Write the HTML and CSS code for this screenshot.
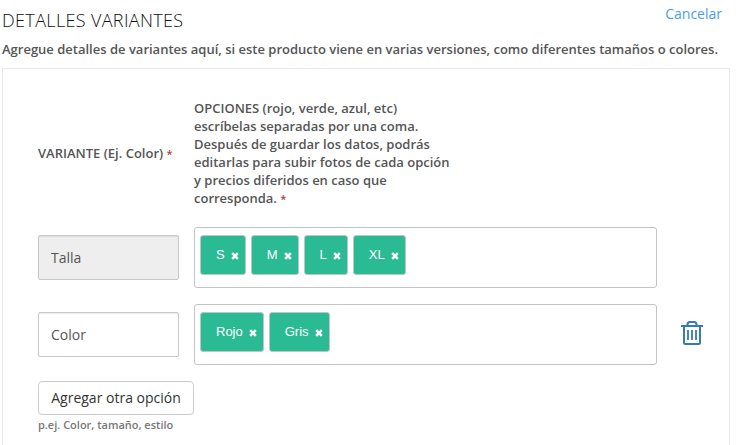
FILE: index.html
```html
<!DOCTYPE html>
<html lang="es">
<head>
<meta charset="utf-8">
<title>Detalles variantes</title>
<link rel="stylesheet" href="styles.css">
</head>
<body>
<svg class="defs" aria-hidden="true">
  <symbol id="times" viewBox="0 0 8 8"><path d="M1.200 1.200 6.800 6.800M6.800 1.200 1.200 6.800" stroke="#fff" stroke-width="2.500" fill="none"/></symbol>
</svg>
<header class="head">
  <h2 class="title">DETALLES VARIANTES</h2>
  <a class="cancel">Cancelar</a>
</header>
<p class="intro">Agregue detalles de variantes aquí, si este producto viene en varias versiones, como diferentes tamaños o colores.</p>
<section class="panel">
  <div class="row labels">
    <label class="label">VARIANTE (Ej. Color) <span class="req">*</span></label>
    <label class="label options">OPCIONES (rojo, verde, azul, etc)<br>escríbelas separadas por una coma.<br>Después de guardar los datos, podrás<br>editarlas para subir fotos de cada opción<br>y precios diferidos en caso que<br>corresponda. <span class="req">*</span></label>
  </div>
  <div class="row">
    <div class="field disabled">Talla</div>
    <div class="tags">
      <span class="tag">S<svg class="x"><use href="#times"/></svg></span>
      <span class="tag">M<svg class="x"><use href="#times"/></svg></span>
      <span class="tag">L<svg class="x"><use href="#times"/></svg></span>
      <span class="tag">XL<svg class="x"><use href="#times"/></svg></span>
    </div>
  </div>
  <div class="row">
    <div class="field">Color</div>
    <div class="tags">
      <span class="tag">Rojo<svg class="x"><use href="#times"/></svg></span>
      <span class="tag">Gris<svg class="x"><use href="#times"/></svg></span>
    </div>
    <svg class="trash" viewBox="0 0 22 24" fill="none" stroke="#337ab7" stroke-width="2">
      <path d="M0 5H22"/>
      <path d="M6.500 5V3.500Q6.500 1 9 1H13Q15.500 1 15.500 3.500V5" />
      <path d="M3 5V21.500Q3 23 4.500 23H17.500Q19 23 19 21.500V5"/>
      <path d="M7 9V19M11 9V19M15 9V19" stroke-width="1.800"/>
    </svg>
  </div>
  <button class="add">Agregar otra opción</button>
  <p class="hint">p.ej. Color, tamaño, estilo</p>
</section>
</body>
</html>
```
FILE: styles.css
```css
* { box-sizing: border-box; }
body {
  margin: 0;
  padding: 0 12px 0 2px;
  height: 445px;
  overflow: hidden;
  background: #fff;
  font-family: "Open Sans", sans-serif;
  font-size: 14px;
  color: #555;
  display: flex;
  flex-direction: column;
}
.defs { position: absolute; width: 0; height: 0; }
.head {
  display: flex;
  justify-content: space-between;
  height: 40px;
  padding-right: 8px;
}
.title {
  margin: 8px 0 0;
  font-size: 18px;
  font-weight: 300;
  line-height: 24px;
  letter-spacing: .35px;
  color: #111;
}
.cancel { margin-top: 4px; line-height: 20px; color: #4b9fe1; }
.intro {
  margin: 0;
  height: 28px;
  font-size: 13px;
  font-weight: 600;
  line-height: 18px;
  white-space: nowrap;
}
.panel {
  flex: 1;
  min-height: 0;
  border: 1px solid #e9e9e9;
  border-bottom: 0;
  padding: 30px 24px 0 35px;
}
.row { display: flex; gap: 15px; margin-bottom: 16px; }
.labels { align-items: center; margin-bottom: 19px; }
.label {
  width: 141px;
  font-size: 13px;
  font-weight: 600;
  line-height: 18px;
  white-space: nowrap;
}
.options { width: 260px; }
.req { color: #a94442; font-size: 11px; }
.field {
  width: 141px;
  height: 45px;
  margin-top: 8px;
  padding: 0 12px;
  border: 1px solid #c8c8c8;
  border-radius: 2px;
  line-height: 43px;
  box-shadow: inset 0 1px 1px rgba(0, 0, 0, .075);
}
.disabled { background: #eee; }
.tags {
  display: flex;
  gap: 5px;
  width: 463px;
  height: 61px;
  padding: 7px 5px;
  border: 1px solid #c4c4c4;
  border-radius: 3px;
}
.tag {
  display: flex;
  align-items: center;
  gap: 6.500px;
  height: 40px;
  padding: 0 5.500px 2px 15px;
  border: 1px solid #bfc6c2;
  border-radius: 3px;
  background: #2abb94;
  color: #fff;
  font: 13px "Liberation Sans", Arial, sans-serif;
}
.x { width: 8px; height: 8px; margin-top: 3px; }
.trash { width: 22px; height: 24px; margin: 17px 0 0 9px; }
.add {
  display: block;
  width: 156px;
  height: 34px;
  padding: 0 0 2px;
  border: 1px solid #ccc;
  border-radius: 4px;
  background: #fff;
  color: #333;
  font: 14px "Open Sans", sans-serif;
}
.hint { margin: 2px 0 0; font-size: 11px; font-weight: 600; line-height: 16px; color: #777; }
```
